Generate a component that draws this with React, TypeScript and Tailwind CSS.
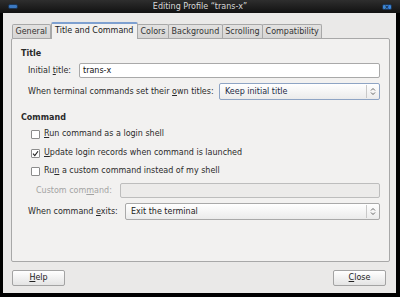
import React from 'react';

const font = { fontFamily: '"DejaVu Sans", "Liberation Sans", sans-serif' };

const tabs = ['General', 'Title and Command', 'Colors', 'Background', 'Scrolling', 'Compatibility'];

const Arrows: React.FC = () => (
  <svg width="6" height="9" viewBox="0 0 6 9" className="text-[#555]">
    <path d="M1 3.5 L3 1.5 L5 3.5 M1 5.5 L3 7.5 L5 5.5" fill="none" stroke="currentColor" strokeWidth="0.9" />
  </svg>
);

const Select: React.FC<{ value: string; focused?: boolean; className: string }> = ({ value, focused, className }) => (
  <div
    className={`h-[17px] flex items-center rounded-[2px] border bg-gradient-to-b from-white to-[#ebebeb] ${
      focused ? 'border-[#8ea4c4]' : 'border-[#a9a9a9]'
    } ${className}`}
  >
    <span className={`flex-1 pl-[5px] ${focused ? 'text-[#1c2a45]' : 'text-[#222]'}`}>{value}</span>
    <div className="h-[13px] w-px bg-[#c8c8c8]" />
    <div className="w-[12px] flex justify-center">
      <Arrows />
    </div>
  </div>
);

const Check: React.FC<{ checked?: boolean; label: React.ReactNode; className: string }> = ({ checked, label, className }) => (
  <div className={`h-[10px] flex items-center pl-[19px] ${className}`}>
    <div className="w-[9px] h-[9px] border border-[#8c8c8c] rounded-[1px] bg-white flex items-center justify-center">
      {checked && (
        <svg width="7" height="7" viewBox="0 0 7 7">
          <path d="M1 3.6 L2.8 5.6 L6 1.2" fill="none" stroke="#222" strokeWidth="1.1" />
        </svg>
      )}
    </div>
    <span className="ml-[4px] text-[#2a2a2a]">{label}</span>
  </div>
);

export default function App() {
  return (
    <div className="w-[400px] h-[297px] bg-black overflow-hidden text-[8px] leading-none" style={font}>
      {/* title bar */}
      <div className="h-[13px] flex items-center px-[8px] bg-gradient-to-b from-[#2e2e2e] to-[#121212]">
        <div className="w-[10px] h-[5px] rounded-[2px] bg-[#3b78c0] border border-[#1b3554]" />
        <div className="flex-1 text-center text-[#d8d8d8] text-[8px]">Editing Profile “trans-x”</div>
        <div className="w-[10px] h-[6px] rounded-[2px] bg-[#3d86d8] border border-[#1b3554] flex items-center justify-center">
          <span className="text-[6px] leading-none text-[#0b1a33] font-bold">×</span>
        </div>
      </div>

      {/* window body */}
      <div className="ml-[3px] w-[393px] h-[280px] bg-[#eae9e8] pt-[8px] flex flex-col">
        {/* tabs */}
        <div className="ml-[9px] h-[17px] flex items-end">
          {tabs.map((t) => {
            const active = t === 'Title and Command';
            return active ? (
              <div
                key={t}
                className="h-[17px] px-[3.5px] flex items-center bg-[#f2f1f0] border-x border-[#a8a8a8] border-t-2 border-t-[#7ea0d0] rounded-t-[2px] text-[#222] relative z-10 -mb-px pb-px"
              >
                {t}
              </div>
            ) : (
              <div
                key={t}
                className="h-[14px] px-[2.5px] flex items-center bg-gradient-to-b from-[#e3e2e1] to-[#d6d5d4] border border-b-0 border-[#a8a8a8] rounded-t-[2px] text-[#333] -ml-px first:ml-0"
              >
                {t}
              </div>
            );
          })}
        </div>

        {/* notebook panel */}
        <div className="ml-[8px] w-[379px] h-[224px] bg-[#f2f1f0] border border-[#a8a8a8] rounded-[2px] flex flex-col text-[#2a2a2a]">
          <div className="h-[10px] mt-[10px] pl-[9px] flex items-center font-bold">Title</div>

          <div className="h-[15px] mt-[4px] flex items-center pl-[16px] pr-[9px]">
            <span className="w-[51px]">
              Initial <span className="underline">t</span>itle:
            </span>
            <div className="flex-1 h-[15px] bg-white border border-[#a9a9a9] rounded-[2px] flex items-center pl-[3px] text-[#111]">
              trans-x
            </div>
          </div>

          <div className="h-[17px] mt-[5px] flex items-center pl-[16px] pr-[9px]">
            <span className="w-[191px]">
              When terminal commands set their <span className="underline">o</span>wn titles:
            </span>
            <Select value="Keep initial title" focused className="flex-1" />
          </div>

          <div className="h-[10px] mt-[13px] pl-[9px] flex items-center font-bold">Command</div>

          <Check className="mt-[6px]" label={<><span className="underline">R</span>un command as a login shell</>} />
          <Check className="mt-[9px]" checked label={<><span className="underline">U</span>pdate login records when command is launched</>} />
          <Check className="mt-[8px]" label={<>Ru<span className="underline">n</span> a custom command instead of my shell</>} />

          <div className="h-[15px] mt-[7px] flex items-center pl-[24px] pr-[9px]">
            <span className="w-[84px] text-[#a3a3a3]">
              Custom com<span className="underline">m</span>and:
            </span>
            <div className="flex-1 h-[15px] bg-[#ecebea] border border-[#bdbdbd] rounded-[2px]" />
          </div>

          <div className="h-[17px] mt-[5px] flex items-center pl-[16px] pr-[9px]">
            <span className="w-[97px]">
              When command <span className="underline">e</span>xits:
            </span>
            <Select value="Exit the terminal" className="flex-1" />
          </div>
        </div>

        {/* buttons */}
        <div className="mt-[8px] px-[9px] flex justify-between">
          <button className="w-[53px] h-[16px] rounded-[2px] border border-[#a3a3a3] bg-gradient-to-b from-white to-[#e4e4e4] text-[#222] flex items-center justify-center">
            <span><span className="underline">H</span>elp</span>
          </button>
          <button className="w-[53px] h-[16px] rounded-[2px] border border-[#a3a3a3] bg-gradient-to-b from-white to-[#e4e4e4] text-[#222] flex items-center justify-center mr-[1px]">
            <span><span className="underline">C</span>lose</span>
          </button>
        </div>
      </div>
    </div>
  );
}
